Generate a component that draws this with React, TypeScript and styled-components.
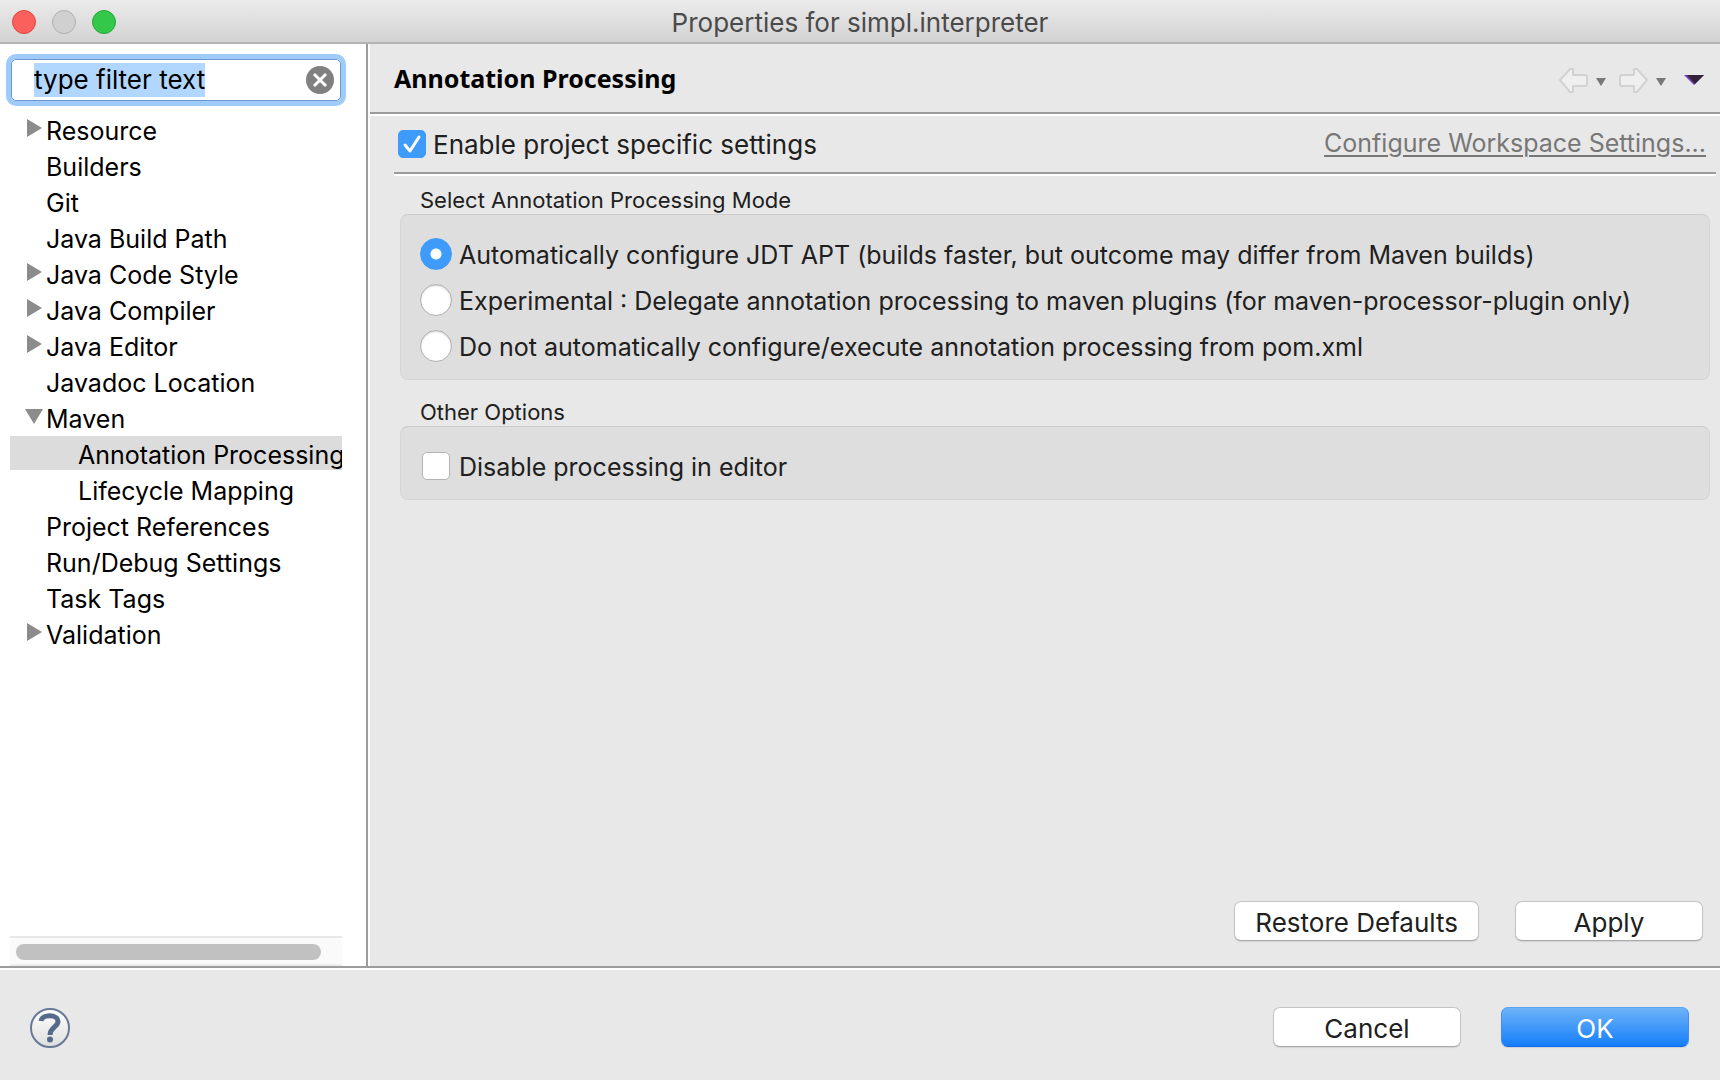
import React, { useEffect, useRef } from "react";
import styled, { createGlobalStyle, css } from "styled-components";

const GlobalStyle = createGlobalStyle`
  * { box-sizing: border-box; }
  html, body, #root { height: 100%; }
  body {
    margin: 0;
    background: #e8e8e8;
    color: #202020;
    font-family: Inter, "Liberation Sans", sans-serif;
    font-size: 25px;
    line-height: 34px;
  }
  button, input { font: inherit; color: inherit; }
`;

const etchedBelow = css`
  border-bottom: 2px solid #9c9c9c;
  box-shadow: 0 2px 0 #fff;
  margin-bottom: 2px;
`;

const Window = styled.div`
  min-height: 100%;
  display: flex;
  flex-direction: column;
`;

const TitleBar = styled.header`
  height: 44px;
  display: grid;
  grid-template-columns: 1fr auto 1fr;
  align-items: center;
  padding: 2px 12px 0;
  background: linear-gradient(#ebebeb, #d3d3d3);
  border-bottom: 2px solid #b4b4b4;
`;

const Lights = styled.div`
  display: flex;
  gap: 16px;
`;

const Light = styled.button<{ $fill: string; $edge: string }>`
  width: 24px;
  height: 24px;
  padding: 0;
  border-radius: 50%;
  border: 1px solid ${(p) => p.$edge};
  background: ${(p) => p.$fill};
`;

const Title = styled.h1`
  margin: 0;
  padding-top: 2px;
  font-size: 26px;
  font-weight: 400;
  color: #4a4a4a;
`;

const Body = styled.div`
  flex: 1;
  display: flex;
  min-height: 0;
  ${etchedBelow}
`;

const Sidebar = styled.aside`
  flex: 0 0 368px;
  min-width: 0;
  display: flex;
  flex-direction: column;
  background: #fff;
  border-right: 2px solid #9c9c9c;
  box-shadow: 2px 0 0 #fff;
  padding: 15px 24px 0 10px;
  color: #000;
`;

const Search = styled.div`
  display: flex;
  align-items: center;
  height: 42px;
  margin: 0 1px 11px;
  padding: 0 6px 0 22px;
  border: 1px solid #6d97c6;
  border-radius: 5px;
  box-shadow: 0 0 0 5px #9fcbfb;
`;

const SearchInput = styled.input`
  flex: 1;
  min-width: 0;
  height: 34px;
  padding: 0;
  border: 0;
  outline: 0;
  background: none;
  font-size: 26px;
  &::selection { background: #b2d7ff; color: #000; }
`;

const ClearButton = styled.button`
  display: flex;
  padding: 0;
  border: 0;
  background: none;
`;

const Tree = styled.ul`
  flex: 1;
  display: flex;
  flex-direction: column;
  gap: 2px;
  margin: 0;
  padding: 0;
  list-style: none;
  overflow: hidden;
`;

const TreeRow = styled.li<{ $nested?: boolean; $selected?: boolean }>`
  display: flex;
  height: 34px;
  padding-left: ${(p) => (p.$nested ? 47 : 15)}px;
  background: ${(p) => (p.$selected ? "#dcdcdc" : "transparent")};
  line-height: 38px;
  white-space: nowrap;
`;

const Twisty = styled.span`
  flex: 0 0 21px;
  padding-top: 6px;
  line-height: 0;
`;

const ScrollTrack = styled.div`
  height: 30px;
  padding: 6px 21px 0 6px;
  background: #fafafa;
  border-top: 2px solid #e7e7e7;
  border-bottom: 2px solid #ededed;
`;

const ScrollThumb = styled.div`
  height: 16px;
  border-radius: 8px;
  background: #c1c1c1;
`;

const Main = styled.main`
  flex: 1;
  min-width: 0;
  display: flex;
  flex-direction: column;
  padding-left: 2px;
`;

const PageHeader = styled.div`
  height: 70px;
  display: flex;
  align-items: center;
  justify-content: space-between;
  padding: 0 16px 0 24px;
  ${etchedBelow}
`;

const PageTitle = styled.h2`
  margin: 0;
  font-family: "Noto Sans", sans-serif;
  font-size: 25px;
  font-weight: 700;
  color: #000;
`;

const Nav = styled.nav`
  display: flex;
  align-items: center;
  padding-top: 4px;
`;

const NavButton = styled.button<{ $gap?: number }>`
  display: flex;
  margin-left: ${(p) => p.$gap ?? 0}px;
  padding: 0;
  border: 0;
  background: none;
`;

const Page = styled.div`
  flex: 1;
  display: flex;
  flex-direction: column;
  padding: 0 4px 25px 24px;
`;

const EnableRow = styled.div`
  height: 58px;
  display: flex;
  align-items: center;
  justify-content: space-between;
  padding: 0 10px 0 4px;
  font-size: 26px;
  ${etchedBelow}
`;

const Link = styled.a`
  padding-bottom: 2px;
  font-size: 25px;
  color: #777;
  text-decoration: underline;
  text-decoration-thickness: 2px;
  text-underline-offset: 3px;
`;

const Group = styled.fieldset`
  margin: 0;
  padding: 0 6px;
  border: 0;
  min-width: 0;
`;

const GroupTitle = styled.legend<{ $gap: number }>`
  padding: ${(p) => p.$gap}px 20px 0;
  font-size: 22px;
  line-height: 28px;
`;

const GroupBox = styled.div`
  display: flex;
  flex-direction: column;
  gap: 14px;
  padding: 23px 19px 17px;
  background: #dedede;
  border: 1px solid #d6d6d6;
  border-top-color: #cbcbcb;
  border-radius: 8px;
`;

const Option = styled.label`
  display: flex;
  align-items: center;
  gap: 7px;
  height: 32px;
  line-height: 32px;
  white-space: nowrap;
`;

const OptionText = styled.span`
  padding-top: 2px;
`;

const Radio = styled.input.attrs({ type: "radio" })`
  appearance: none;
  flex: none;
  width: 32px;
  height: 32px;
  margin: 0;
  border: 1px solid #b0b0b0;
  border-radius: 50%;
  background: #fff;
  box-shadow: inset 0 1px 2px #d0d0d0;
  &:checked {
    border-color: #3f9bfa;
    background: radial-gradient(circle, #fff 5px, #3f9bfa 6px);
    box-shadow: none;
  }
`;

const Check = styled.input.attrs({ type: "checkbox" })<{ $inset?: number }>`
  appearance: none;
  flex: none;
  width: 28px;
  height: 28px;
  margin: 0 ${(p) => p.$inset ?? 0}px;
  border: 1px solid #b4b4b4;
  border-radius: 5px;
  background: #fff;
  &:checked {
    border-color: #3f9bfa;
    background: #3f9bfa;
  }
`;

const CheckWrap = styled.span`
  display: grid;
  > * { grid-area: 1 / 1; }
  > svg { pointer-events: none; }
`;

const Actions = styled.div`
  display: flex;
  justify-content: flex-end;
  gap: 36px;
  margin-top: auto;
  padding-right: 13px;
`;

const Button = styled.button<{ $primary?: boolean }>`
  min-width: 188px;
  height: 40px;
  padding: 3px 20px 0;
  font-size: 26px;
  line-height: 34px;
  border-radius: 7px;
  border: 1px solid #c3c3c3;
  border-bottom-color: #a9a9a9;
  background: #fff;
  box-shadow: 0 1px 1px #d2d2d2;
  ${(p) =>
    p.$primary &&
    css`
      color: #fff;
      border-color: #59a5f3 #3f8ff0 #1168f2;
      background: linear-gradient(#6eb3f8, #157efb);
    `}
`;

const Footer = styled.footer`
  height: 110px;
  display: flex;
  align-items: center;
  gap: 40px;
  padding: 4px 31px 0 30px;
`;

const HelpButton = styled.button`
  display: flex;
  margin-right: auto;
  padding: 0;
  border: 0;
  background: none;
`;

type Item = { label: string; state?: "open" | "closed"; nested?: boolean; selected?: boolean };

const items: Item[] = [
  { label: "Resource", state: "closed" },
  { label: "Builders" },
  { label: "Git" },
  { label: "Java Build Path" },
  { label: "Java Code Style", state: "closed" },
  { label: "Java Compiler", state: "closed" },
  { label: "Java Editor", state: "closed" },
  { label: "Javadoc Location" },
  { label: "Maven", state: "open" },
  { label: "Annotation Processing", nested: true, selected: true },
  { label: "Lifecycle Mapping", nested: true },
  { label: "Project References" },
  { label: "Run/Debug Settings" },
  { label: "Task Tags" },
  { label: "Validation", state: "closed" },
];

const modes = [
  "Automatically configure JDT APT (builds faster, but outcome may differ from Maven builds)",
  "Experimental : Delegate annotation processing to maven plugins (for maven-processor-plugin only)",
  "Do not automatically configure/execute annotation processing from pom.xml",
];

const Arrow = ({ flip }: { flip?: boolean }) => (
  <svg width="30" height="26" viewBox="0 0 30 26">
    <path
      d="M2 13 12 2h3v6h12q2 0 2 2v7q0 2-2 2H15v6h-3z"
      transform={flip ? "translate(30 0) scale(-1 1)" : undefined}
      fill="#efefef"
      stroke="#d2d2d2"
      strokeWidth="2"
      strokeLinejoin="round"
    />
  </svg>
);

const SmallCaret = () => (
  <svg width="10" height="12" viewBox="0 0 10 12">
    <path d="M0 4h10L5 12z" fill="#777" />
  </svg>
);

export default function App() {
  const filter = useRef<HTMLInputElement>(null);
  useEffect(() => {
    filter.current?.focus();
    filter.current?.select();
  }, []);

  return (
    <Window>
      <GlobalStyle />
      <TitleBar>
        <Lights>
          <Light aria-label="Close" $fill="#fc605c" $edge="#e2443f" />
          <Light aria-label="Minimize" $fill="#d0d0d0" $edge="#b0b0b0" />
          <Light aria-label="Zoom" $fill="#34c84a" $edge="#22a934" />
        </Lights>
        <Title>Properties for simpl.interpreter</Title>
      </TitleBar>

      <Body>
        <Sidebar>
          <Search>
            <SearchInput ref={filter} aria-label="Filter" defaultValue="type filter text" spellCheck={false} />
            <ClearButton aria-label="Clear">
              <svg width="28" height="28" viewBox="0 0 28 28">
                <circle cx="14" cy="14" r="14" fill="#808080" />
                <path d="M8 8 20 20M20 8 8 20" stroke="#fff" strokeWidth="3" />
              </svg>
            </ClearButton>
          </Search>
          <Tree>
            {items.map((item) => (
              <TreeRow key={item.label} $nested={item.nested} $selected={item.selected}>
                <Twisty>
                  {item.state && (
                    <svg width="18" height="20" viewBox="0 0 18 20">
                      <path d={item.state === "open" ? "M0 3h18L9 18z" : "M2 1v18L17 10z"} fill="#8c8c8c" />
                    </svg>
                  )}
                </Twisty>
                {item.label}
              </TreeRow>
            ))}
          </Tree>
          <ScrollTrack>
            <ScrollThumb />
          </ScrollTrack>
        </Sidebar>

        <Main>
          <PageHeader>
            <PageTitle>Annotation Processing</PageTitle>
            <Nav>
              <NavButton aria-label="Back"><Arrow /></NavButton>
              <NavButton aria-label="Back history" $gap={8}><SmallCaret /></NavButton>
              <NavButton aria-label="Forward" $gap={13}><Arrow flip /></NavButton>
              <NavButton aria-label="Forward history" $gap={7}><SmallCaret /></NavButton>
              <NavButton aria-label="View menu" $gap={18}>
                <svg width="20" height="10" viewBox="0 0 20 10">
                  <path d="M0 0h20L10 10z" fill="#6b3fb0" />
                  <path d="M3 0h17l-9 9z" fill="#332338" />
                </svg>
              </NavButton>
            </Nav>
          </PageHeader>

          <Page>
            <EnableRow>
              <Option>
                <CheckWrap>
                  <Check defaultChecked />
                  <svg width="28" height="28" viewBox="0 0 28 28" fill="none">
                    <path d="M7 15l5 6L21 7" stroke="#fff" strokeWidth="3" strokeLinecap="round" strokeLinejoin="round" />
                  </svg>
                </CheckWrap>
                <OptionText>Enable project specific settings</OptionText>
              </Option>
              <Link href="#workspace">Configure Workspace Settings...</Link>
            </EnableRow>

            <Group>
              <GroupTitle $gap={10}>Select Annotation Processing Mode</GroupTitle>
              <GroupBox>
                {modes.map((mode, i) => (
                  <Option key={mode}>
                    <Radio name="mode" defaultChecked={i === 0} />
                    <OptionText>{mode}</OptionText>
                  </Option>
                ))}
              </GroupBox>
            </Group>

            <Group>
              <GroupTitle $gap={18}>Other Options</GroupTitle>
              <GroupBox>
                <Option>
                  <Check $inset={2} />
                  <OptionText>Disable processing in editor</OptionText>
                </Option>
              </GroupBox>
            </Group>

            <Actions>
              <Button>Restore Defaults</Button>
              <Button>Apply</Button>
            </Actions>
          </Page>
        </Main>
      </Body>

      <Footer>
        <HelpButton aria-label="Help">
          <svg width="40" height="42" viewBox="0 -2 40 42" fill="none">
            <defs>
              <linearGradient id="help" x2="0" y2="1">
                <stop stopColor="#fff" />
                <stop offset="1" stopColor="#dedede" />
              </linearGradient>
            </defs>
            <circle cx="20" cy="20" r="19" fill="url(#help)" stroke="#667896" strokeWidth="2" />
            <path d="M11 13C12 6 28 6 28 13.500C28 19 20 19 20 27" stroke="#566a8b" strokeWidth="5" />
            <circle cx="20" cy="31.500" r="3" fill="#566a8b" />
          </svg>
        </HelpButton>
        <Button>Cancel</Button>
        <Button $primary>OK</Button>
      </Footer>
    </Window>
  );
}
